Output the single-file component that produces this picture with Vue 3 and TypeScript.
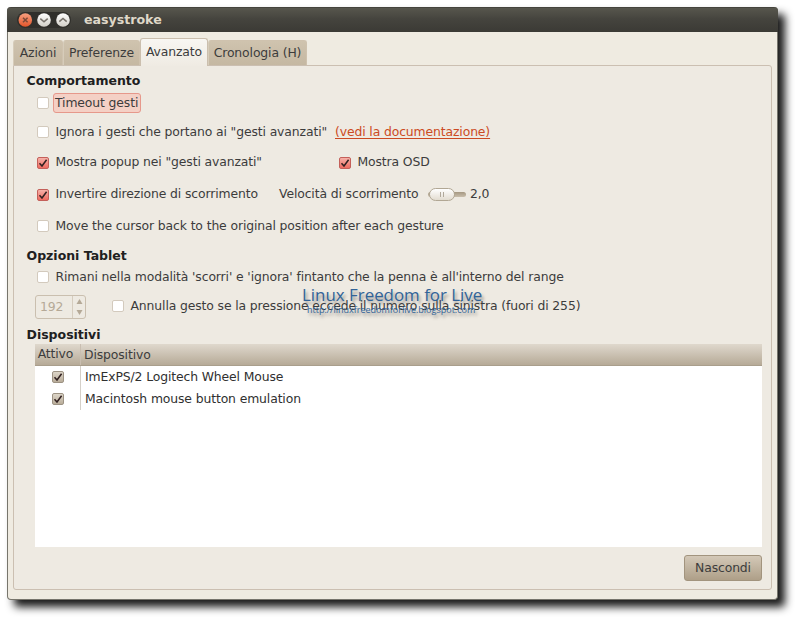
<script setup lang="ts">
import { ref } from "vue";

interface Device {
  name: string;
  active: boolean;
}

const tabs = [
  { label: "Azioni", width: 50 },
  { label: "Preferenze", width: 77 },
  { label: "Avanzato", width: 68 },
  { label: "Cronologia (H)", width: 99 },
];
const currentTab = ref(2);

const timeout = ref(false);
const ignoreAdvanced = ref(false);
const showPopup = ref(true);
const showOsd = ref(true);
const invertScroll = ref(true);
const moveBack = ref(false);
const stayInMode = ref(false);
const abortOnPressure = ref(false);

const pressure = ref(192);
const scrollSpeed = ref("2,0");

const devices = ref<Device[]>([
  { name: "ImExPS/2 Logitech Wheel Mouse", active: true },
  { name: "Macintosh mouse button emulation", active: true },
]);
</script>

<template>
  <div class="screen">
    <div class="window">
      <header class="titlebar">
        <div class="controls">
          <svg width="54" height="16" viewBox="0 0 54 16">
            <defs>
              <linearGradient id="close" x1="0" y1="0" x2="0" y2="1">
                <stop offset="0" stop-color="#f7a080" />
                <stop offset="1" stop-color="#e2552a" />
              </linearGradient>
              <linearGradient id="plain" x1="0" y1="0" x2="0" y2="1">
                <stop offset="0" stop-color="#ffffff" />
                <stop offset="1" stop-color="#d2cfc8" />
              </linearGradient>
            </defs>
            <circle cx="8.3" cy="8" r="6.8" fill="url(#close)" />
            <circle cx="27" cy="8" r="6.8" fill="url(#plain)" />
            <circle cx="46" cy="8" r="6.8" fill="url(#plain)" />
            <g fill="none" stroke="#77726b" stroke-width="1.5">
              <path d="M6 5.7l4.6 4.6M10.6 5.7L6 10.3" stroke="#7d4a38" />
              <path d="M23.3 6.6l3.7 3.2 3.7-3.2" />
              <path d="M42.3 9.6l3.7-3.2 3.7 3.2" />
            </g>
          </svg>
        </div>
        <span class="title">easystroke</span>
      </header>

      <nav class="tabs">
        <button
          v-for="(tab, i) in tabs"
          :key="tab.label"
          class="tab"
          :class="{ active: i === currentTab }"
          :style="{ width: tab.width + 'px' }"
          @click="currentTab = i"
        >
          {{ tab.label }}
        </button>
      </nav>

      <main class="panel">
        <h2 class="h-behavior">Comportamento</h2>
        <div class="row r-timeout">
          <label class="check">
            <input v-model="timeout" type="checkbox" />
            <span class="focused">Timeout gesti</span>
          </label>
        </div>
        <div class="row r-ignore">
          <label class="check ignore">
            <input v-model="ignoreAdvanced" type="checkbox" />
            <span>Ignora i gesti che portano ai "gesti avanzati"</span>
          </label>
          <a class="link" href="#">(vedi la documentazione)</a>
        </div>
        <div class="row r-popup">
          <label class="check popup">
            <input v-model="showPopup" type="checkbox" />
            <span>Mostra popup nei "gesti avanzati"</span>
          </label>
          <label class="check">
            <input v-model="showOsd" type="checkbox" />
            <span>Mostra OSD</span>
          </label>
        </div>
        <div class="row r-scroll">
          <label class="check invert">
            <input v-model="invertScroll" type="checkbox" />
            <span>Invertire direzione di scorrimento</span>
          </label>
          <span class="speed">Velocità di scorrimento</span>
          <span class="slider"><span class="knob"><i /><i /></span></span>
          <span>{{ scrollSpeed }}</span>
        </div>
        <div class="row r-move">
          <label class="check">
            <input v-model="moveBack" type="checkbox" />
            <span>Move the cursor back to the original position after each gesture</span>
          </label>
        </div>

        <h2 class="h-tablet">Opzioni Tablet</h2>
        <div class="row r-stay">
          <label class="check">
            <input v-model="stayInMode" type="checkbox" />
            <span>Rimani nella modalità 'scorri' e 'ignora' fintanto che la penna è all'interno del range</span>
          </label>
        </div>
        <div class="row r-abort">
          <span class="spin">
            <span class="spin-value">{{ pressure }}</span>
            <span class="spin-arrows">
              <svg width="7" height="5" viewBox="0 0 7 5"><path d="M3.5 0L6.5 5h-6z" /></svg>
              <svg width="7" height="5" viewBox="0 0 7 5"><path d="M.5 0h6l-3 5z" /></svg>
            </span>
          </span>
          <label class="check">
            <input v-model="abortOnPressure" type="checkbox" />
            <span>Annulla gesto se la pressione eccede il numero sulla sinistra (fuori di 255)</span>
          </label>
          <div class="watermark">
            <div class="mark-name">Linux Freedom for Live</div>
            <div class="mark-url">http://linuxfreedomforlive.blogspot.com</div>
          </div>
        </div>

        <h2 class="h-devices">Dispositivi</h2>
        <div class="list">
          <div class="list-head">
            <span class="col-active">Attivo</span>
            <span class="col-name">Dispositivo</span>
          </div>
          <div v-for="device in devices" :key="device.name" class="list-row">
            <span class="col-active">
              <input v-model="device.active" class="grey" type="checkbox" />
            </span>
            <span class="col-name">{{ device.name }}</span>
          </div>
        </div>

        <footer class="actions">
          <button class="hide">Nascondi</button>
        </footer>
      </main>
    </div>
  </div>
</template>

<style>
body {
  background: #fff;
}
</style>

<style scoped>
.screen {
  box-sizing: border-box;
  width: 800px;
  height: 622px;
  padding: 7px;
  overflow: hidden;
}

.window {
  box-sizing: border-box;
  display: flex;
  flex-direction: column;
  width: 771px;
  height: 593px;
  border: 1px solid #77756c;
  border-top: 0;
  border-radius: 4px;
  background: #efebe1;
  box-shadow: 7px 7px 9px rgba(0, 0, 0, 0.9);
  color: #3c3c3c;
  font-family: "DejaVu Sans", sans-serif;
  font-size: 12.4px;
  letter-spacing: -0.12px;
  line-height: 16px;
  white-space: nowrap;
}

.titlebar {
  display: flex;
  align-items: center;
  flex: none;
  height: 25px;
  margin: 0 -1px;
  border-radius: 4px 4px 0 0;
  background: linear-gradient(#33322d 0, #57564d 1px, #45443e 12px, #3b3a35 100%);
}

.controls {
  display: flex;
  width: 54px;
  height: 16px;
  margin-left: 10px;
  border-radius: 8px;
  background: #302f2b;
}

.title {
  margin-left: 13px;
  color: #dfd8c8;
  font-size: 12.6px;
  font-weight: bold;
  letter-spacing: 0;
}

.tabs {
  display: flex;
  align-items: flex-end;
  flex: none;
  height: 33px;
  padding-left: 5px;
}

button {
  padding: 0;
  border: 0;
  color: inherit;
  font: inherit;
  letter-spacing: inherit;
}

.tab {
  box-sizing: border-box;
  height: 25px;
  border: 1px solid #cfc2ae;
  border-left-color: #d6ccba;
  border-bottom: 0;
  border-radius: 3px 3px 0 0;
  background: linear-gradient(#cfc3ae, #c5b8a2);
}

.tab.active {
  position: relative;
  height: 28px;
  margin-bottom: -1px;
  padding-bottom: 1px;
  border-color: #cbbfae;
  background: linear-gradient(#f8f6f2, #efebe3);
}

.panel {
  box-sizing: border-box;
  display: flex;
  flex-direction: column;
  width: 759px;
  height: 525px;
  margin-left: 5px;
  padding: 5px 9px 8px 21px;
  border: 1px solid #cbbfb1;
  border-radius: 0 3px 3px 3px;
  background: #eeeae2;
}

h2 {
  flex: none;
  height: 20px;
  margin: 0 0 0 -8.5px;
  color: #202020;
  font-size: 12.5px;
  font-weight: bold;
  letter-spacing: 0;
  line-height: 20px;
}

.row {
  position: relative;
  display: flex;
  align-items: center;
  flex: none;
  margin-left: 2px;
}

.r-timeout {
  height: 22px;
  margin-top: 1px;
}

.r-ignore {
  height: 30px;
  margin-top: 3px;
}

.r-popup {
  height: 30px;
}

.r-scroll {
  height: 32px;
  margin-top: 1px;
}

.r-move {
  height: 32px;
}

.h-tablet {
  margin-top: 4px;
}

.r-stay {
  height: 20px;
  margin-top: 1px;
}

.r-abort {
  height: 26px;
  margin-top: 6px;
}

.h-devices {
  height: 18px;
  margin-top: 7px;
  line-height: 18px;
}

.check {
  display: flex;
  align-items: center;
  gap: 6.5px;
}

input {
  appearance: none;
  flex: none;
  box-sizing: border-box;
  width: 12px;
  height: 12px;
  margin: 0;
  border: 1px solid #d3cabd;
  border-radius: 2px;
  background: #fff;
}

input:checked {
  margin-top: 1px;
  border-color: #c4605a;
  background:
    url("data:image/svg+xml,%3Csvg xmlns='http://www.w3.org/2000/svg' viewBox='0 0 10 10'%3E%3Cpath d='M1.5 5.2L4 8 8.6 1.8' fill='none' stroke='%23302020' stroke-width='1.5'/%3E%3C/svg%3E"),
    linear-gradient(#f6b1a8, #ee6b60);
}

input.grey:checked {
  margin-top: 0;
  border-color: #9c9283;
  background:
    url("data:image/svg+xml,%3Csvg xmlns='http://www.w3.org/2000/svg' viewBox='0 0 10 10'%3E%3Cpath d='M1.5 5.2L4 8 8.6 1.8' fill='none' stroke='%23302020' stroke-width='1.5'/%3E%3C/svg%3E"),
    linear-gradient(#dcd5c8, #b9ad9a);
}

.focused {
  margin-left: -2.5px;
  padding: 1px 2px 1px 1px;
  border: 1px solid #e6988b;
  border-radius: 3px;
  background: #f4d0c5;
}

.ignore {
  width: 298px;
}

.link {
  color: #cc4a22;
  text-underline-offset: 2px;
}

.popup {
  width: 302px;
}

.invert {
  width: 242px;
}

.speed {
  width: 149px;
}

.slider {
  display: flex;
  align-items: center;
  width: 38px;
  height: 5px;
  margin: 1px 4px 0 0;
  border-radius: 3px;
  background: linear-gradient(#a59882, #c9beac);
}

.knob {
  box-sizing: border-box;
  display: flex;
  align-items: center;
  justify-content: center;
  gap: 2px;
  width: 26px;
  height: 13px;
  margin-left: 1px;
  border: 1px solid #b1a794;
  border-radius: 7px;
  background: linear-gradient(#fff, #e2dcd0);
}

.knob i {
  width: 1px;
  height: 5px;
  background: #b1a99b;
}

.spin {
  box-sizing: border-box;
  display: flex;
  width: 51px;
  height: 24px;
  margin: 2px 26px 0 -2px;
  border: 1px solid #cabfaf;
  border-radius: 3px;
}

.spin-value {
  width: 37px;
  padding-left: 4px;
  box-sizing: border-box;
  border-right: 1px solid #d6cdbf;
  color: #b5a997;
  line-height: 21px;
}

.spin-arrows {
  display: flex;
  flex: 1;
  flex-direction: column;
  align-items: center;
  justify-content: space-between;
  padding: 3px 0;
  fill: #b5a997;
}

.watermark {
  position: absolute;
  left: 265px;
  top: -6px;
  color: #316398;
  font-family: "Open Sans", sans-serif;
  letter-spacing: 0;
  text-shadow: 2px 3px 3px rgba(80, 80, 80, 0.55);
}

.mark-name {
  font-size: 16.9px;
  line-height: 16px;
}

.mark-url {
  margin: 1px 0 0 5px;
  font-size: 9px;
  line-height: 12px;
}

.list {
  flex: none;
  width: 727px;
  height: 203px;
  background: #fff;
}

.list-head,
.list-row {
  display: flex;
  height: 22px;
}

.list-head {
  box-sizing: border-box;
  border-bottom: 1px solid #a99e8c;
  background: linear-gradient(#dfd8cd, #b6aa97);
}

.list-row {
  color: #303030;
  line-height: 22px;
}

.col-active {
  display: flex;
  align-items: center;
  justify-content: center;
  box-sizing: border-box;
  width: 46px;
  border-right: 1px solid #d5d0c8;
}

.list-head .col-active {
  padding: 0 4px 1px 0;
  border-right-color: #c9beb0;
}

.col-name {
  padding-left: 4px;
}

.list-head .col-name {
  padding-left: 3px;
  line-height: 21px;
}

.actions {
  display: flex;
  justify-content: flex-end;
  margin-top: auto;
}

.hide {
  box-sizing: border-box;
  width: 78px;
  height: 26px;
  border: 1px solid #a2947e;
  border-radius: 3px;
  background: linear-gradient(#d3c8b7, #ae9f88);
}
</style>
